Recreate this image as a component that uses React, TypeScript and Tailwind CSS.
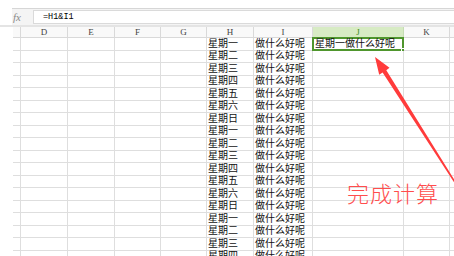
import React from 'react';

const cols = [
  { key: 'stub', label: '', w: 8 },
  { key: 'D', label: 'D', w: 47 },
  { key: 'E', label: 'E', w: 47 },
  { key: 'F', label: 'F', w: 46 },
  { key: 'G', label: 'G', w: 46 },
  { key: 'H', label: 'H', w: 47 },
  { key: 'I', label: 'I', w: 59 },
  { key: 'J', label: 'J', w: 91 },
  { key: 'K', label: 'K', w: 46 },
  { key: 'L', label: '', w: 40 },
];

const days = ['星期一', '星期二', '星期三', '星期四', '星期五', '星期六', '星期日'];
const rows = Array.from({ length: 18 }, (_, i) => days[i % 7]);

const cjk = { fontFamily: '"Liberation Sans", "Noto Sans CJK SC", sans-serif' };

const App: React.FC = () => {
  return (
    <div className="relative w-[454px] h-[256px] overflow-hidden bg-white text-black">
      {/* Top spacer */}
      <div className="h-[8px]" />

      {/* Formula bar */}
      <div className="ml-[12px] h-[17px] flex items-center border-t border-[#d6d6d6] bg-[#f4f4f4]">
        <div
          className="w-[21px] pl-[1px] text-[11px] italic text-[#8a8a8a] leading-none"
          style={{ fontFamily: '"Liberation Serif", serif' }}
        >
          fx
        </div>
        <div className="flex-1 h-[14px] bg-white border border-[#dadada] border-r-0 flex items-center pl-[9px]">
          <span className="text-[8.5px] leading-none" style={{ fontFamily: '"Liberation Mono", monospace' }}>
            =H1&amp;I1
          </span>
        </div>
      </div>

      {/* Band */}
      <div className="h-[2px] bg-[#e4e4e4]" />

      {/* Column header */}
      <div className="flex h-[11px] pl-[13px]">
        {cols.map((c) => (
          <div
            key={c.key}
            style={{ width: c.w, fontFamily: '"Liberation Serif", serif' }}
            className={`shrink-0 h-full flex items-center justify-center text-[9px] leading-none border-r border-b ${
              c.key === 'J'
                ? 'bg-[#d7ebc4] text-[#3f8f22] border-[#c6dcb4]'
                : 'bg-[#f9f9f9] text-[#444] border-[#d9d9d9]'
            }`}
          >
            {c.label}
          </div>
        ))}
      </div>

      {/* Grid rows */}
      {rows.map((day, r) => (
        <div key={r} className="flex h-[12.5px] pl-[13px]">
          {cols.map((c) => (
            <div
              key={c.key}
              style={{ width: c.w, ...cjk }}
              className="relative shrink-0 h-full border-r border-b border-[#dedede] flex items-center text-[10px] leading-none text-[#111] pl-[1px] whitespace-nowrap"
            >
              {c.key === 'H' && day}
              {c.key === 'I' && '做什么好呢'}
              {c.key === 'J' && r === 0 && (
                <div className="absolute -left-[1px] -top-[1px] w-[92px] h-[13.5px] border-2 border-[#4f962d] flex items-center pl-[1px]">
                  星期一做什么好呢
                  <div className="absolute -right-[3px] -bottom-[3px] w-[4px] h-[4px] bg-[#4f962d] border border-white" />
                </div>
              )}
            </div>
          ))}
        </div>
      ))}

      {/* Annotation arrow */}
      <svg className="absolute left-0 top-0 pointer-events-none" width="454" height="256" viewBox="0 0 454 256">
        <polygon
          points="375,57 389.5,67.8 386.3,70.2 462,192 461,193 382.6,72.6 379.2,74.8"
          fill="#ff3b3b"
        />
      </svg>

      {/* Annotation text */}
      <div
        className="absolute left-[347px] top-[184px] text-[22px] leading-none text-[#ff4d4d] font-light tracking-[1px]"
        style={cjk}
      >
        完成计算
      </div>
    </div>
  );
};

export default App;
